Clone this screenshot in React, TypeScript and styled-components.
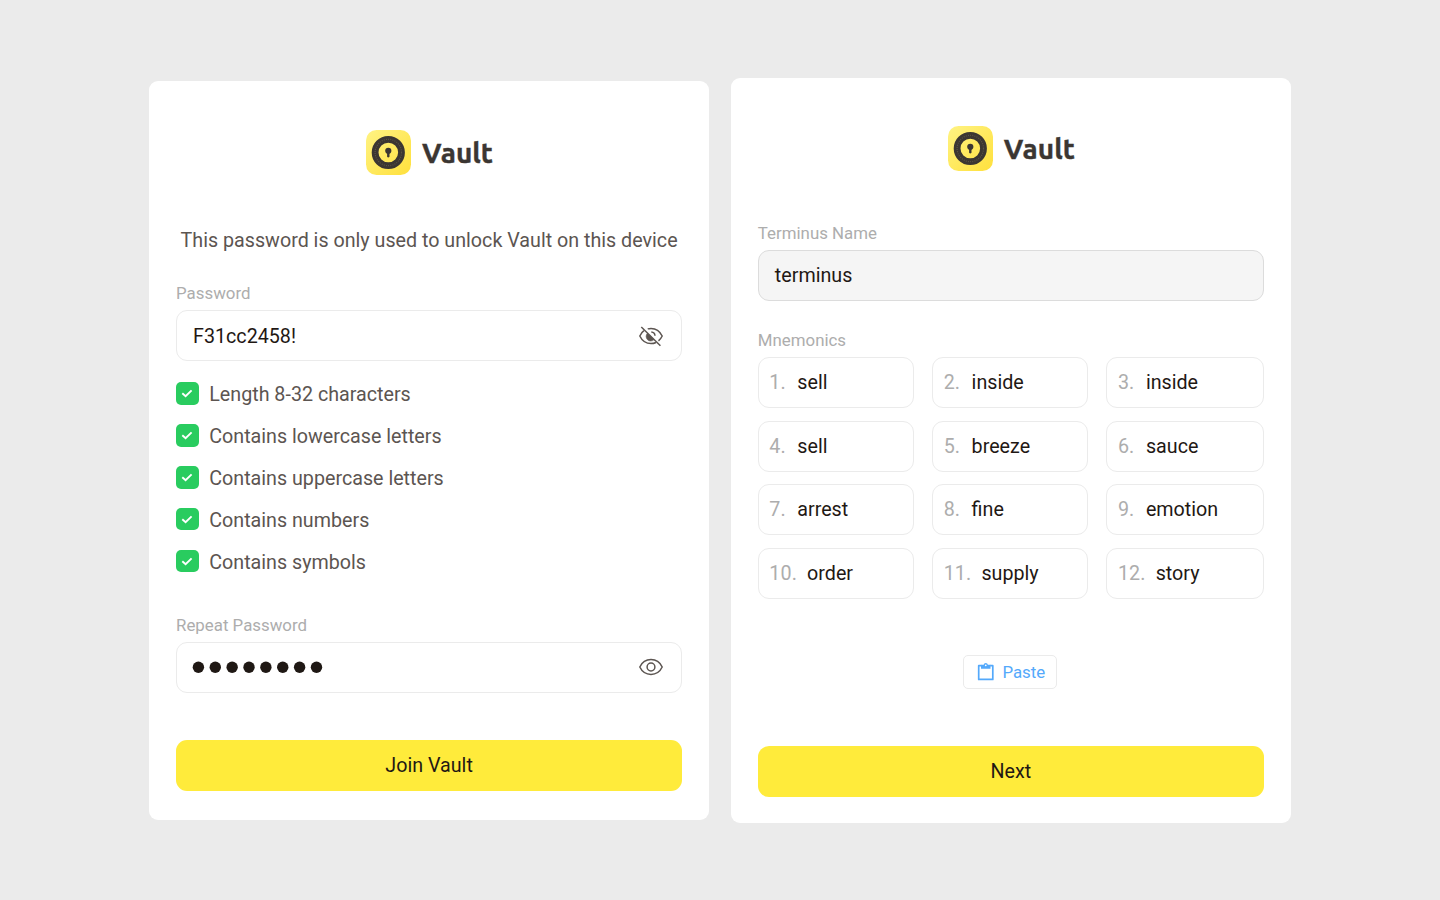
import React from "react";
import styled, { createGlobalStyle } from "styled-components";

const GlobalStyle = createGlobalStyle`
  *, *::before, *::after { box-sizing: border-box; }
  body { margin: 0; background: #ebebeb; font-family: Roboto, "Liberation Sans", sans-serif; }
`;

const Page = styled.main`
  display: flex;
  align-items: center;
  justify-content: center;
  gap: 22.5px;
  width: 1440px;
  height: 900px;
  overflow: hidden;
`;

const Card = styled.section<{ $height: number; $top: number }>`
  display: flex;
  flex-direction: column;
  width: 559.3px;
  height: ${(p) => p.$height}px;
  padding: ${(p) => p.$top}px 26.6px 0;
  border-radius: 9px;
  background: #fff;
`;

const Brand = styled.header`
  display: flex;
  align-items: center;
  justify-content: center;
  gap: 11px;
  height: 45px;
  padding-left: 0.8px;
`;

const BrandName = styled.h1`
  margin: 0;
  padding-top: 1px;
  font: 700 28px/40px Ubuntu, "Noto Sans", sans-serif;
  letter-spacing: 0.05px;
  -webkit-text-stroke: 0.4px #3b3632;
  color: #3b3632;
`;

const Intro = styled.p`
  margin: 51px 0 0;
  font-size: 19.7px;
  line-height: 30px;
  text-align: center;
  white-space: nowrap;
  color: #5c5551;
`;

const Label = styled.label<{ $gap: number }>`
  margin-top: ${(p) => p.$gap}px;
  font-size: 16.85px;
  line-height: 22px;
  color: #adadad;
`;

const Field = styled.div<{ $filled?: boolean }>`
  display: flex;
  align-items: center;
  justify-content: space-between;
  flex: none;
  height: 51px;
  margin-top: 6px;
  padding: 0 18px 0 16px;
  border: 1.3px solid ${(p) => (p.$filled ? "#dcdcdc" : "#ebebeb")};
  border-radius: 11px;
  background: ${(p) => (p.$filled ? "#f5f5f5" : "#fff")};
  font-size: 19.7px;
  color: #1f1814;
`;

const FieldText = styled.span<{ $drop?: number; $lift?: number }>`
  padding-top: ${(p) => p.$drop ?? 0}px;
  padding-bottom: ${(p) => p.$lift ?? 0}px;
`;

const Rules = styled.ul`
  display: flex;
  flex-direction: column;
  gap: 18.9px;
  margin: 21px 0 0;
  padding: 0;
  list-style: none;
`;

const Rule = styled.li`
  display: flex;
  align-items: center;
  gap: 10.6px;
  height: 23px;
  font-size: 19.7px;
  line-height: 23px;
  color: #5c5551;
`;

const RuleText = styled.span`
  padding-top: 2px;
`;

const Tick = styled.span`
  display: grid;
  place-items: center;
  width: 22.6px;
  height: 22.6px;
  border-radius: 5px;
  background: #29cc5f;
`;

const Submit = styled.button<{ $gap: number; $lift?: number }>`
  flex: none;
  height: 51px;
  margin-top: ${(p) => p.$gap}px;
  padding: 0 0 ${(p) => p.$lift ?? 0}px;
  border: 0;
  border-radius: 11px;
  background: #ffeb3b;
  font-family: inherit;
  font-size: 19.7px;
  color: #1f1814;
`;

const Words = styled.ol`
  display: grid;
  grid-template-columns: 156px 156px 157.5px;
  justify-content: space-between;
  row-gap: 12.5px;
  margin: 6px 0 0;
  padding: 0;
  list-style: none;
`;

const Word = styled.li`
  display: flex;
  align-items: center;
  gap: 11.5px;
  height: 51px;
  padding: 0.6px 0 0 10.5px;
  border: 1.3px solid #ebebeb;
  border-radius: 11px;
  font-size: 19.7px;
  color: #1f1814;
`;

const Index = styled.span<{ $wide: boolean }>`
  margin-right: ${(p) => (p.$wide ? -1.4 : 0)}px;
  letter-spacing: 0.1px;
  color: #adadad;
`;

const Paste = styled.button`
  display: flex;
  align-items: center;
  align-self: center;
  flex: none;
  gap: 7.5px;
  width: 94px;
  height: 34px;
  margin: 56.5px 2px 0 0;
  padding: 0 0 1px 13px;
  border: 1.3px solid #ebebeb;
  border-radius: 5px;
  background: #fff;
  font-family: inherit;
  font-size: 16.85px;
  color: #54a9fb;
`;

const Logo = ({ id }: { id: string }) => (
  <svg width="45" height="45" viewBox="0 0 45 45">
    <defs>
      <linearGradient id={id} x1="0" y1="0" x2="1" y2="1">
        <stop offset="0" stopColor="#fff383" />
        <stop offset="1" stopColor="#ffe03c" />
      </linearGradient>
    </defs>
    <rect width="45" height="45" rx="10.5" fill={`url(#${id})`} />
    <circle cx="22.3" cy="22.5" r="13.2" fill="none" stroke="#3b3632" strokeWidth="6.8" />
    <circle cx="22.3" cy="22.5" r="13.2" fill="none" stroke="#5c5444" strokeWidth="1.2" strokeDasharray="1 1.2" />
    <circle cx="22.3" cy="20.8" r="3.1" fill="#3b3632" />
    <path d="M21.1 22h2.4v4.8q-1.2 1.2-2.4 0z" fill="#3b3632" />
  </svg>
);

const Check = () => (
  <svg width="12" height="9" viewBox="0 0 12 9" fill="none">
    <path d="M1.3 4.2 4.6 7.3 10.6 1.4" stroke="#fff" strokeWidth="1.9" />
  </svg>
);

const Dots = () => (
  <svg width="132" height="12" viewBox="0 0 132 12" fill="#1f1814" overflow="visible">
    {Array.from({ length: 8 }, (_, i) => (
      <circle key={i} cx={5.4 + i * 16.87} cy="6.2" r="5.7" />
    ))}
  </svg>
);

const Eye = () => (
  <svg width="24" height="24" viewBox="0 0 24 24" fill="none" stroke="#5c5551" strokeWidth="1.5">
    <path d="M.8 12C3.2 7 7.2 4.6 12 4.6S20.8 7 23.2 12C20.8 17 16.8 19.4 12 19.4S3.2 17 .8 12Z" />
    <circle cx="12" cy="12" r="3.9" />
  </svg>
);

const EyeOff = () => (
  <svg width="24" height="24" viewBox="0 0 24 24" fill="none" stroke="#5c5551" strokeWidth="1.5">
    <path d="M4.9 6.7C3.2 8 1.8 9.8.8 12c2.4 5 6.4 7.6 11.2 7.6 1.8 0 3.5-.4 5-1.1M8.7 4.9A13 13 0 0 1 12 4.4c4.8 0 8.8 2.6 11.2 7.6a14 14 0 0 1-3.7 4.8" />
    <path d="M8.4 9.3a4.5 4.5 0 0 0 6.6 6.3z" fill="#5c5551" strokeWidth=".6" />
    <path d="M12.3 8.1a4 4 0 0 1 3.7 3.7" />
    <path d="M2.3 3 21.4 21.7" strokeWidth="1.5" />
  </svg>
);

const Clipboard = () => (
  <svg width="18" height="18" viewBox="0 0 18 18" fill="none">
    <path d="M4.4 2.7H1.7v13.7h14.1V2.7h-2.7" stroke="#54a9fb" strokeWidth="1.7" strokeLinejoin="round" />
    <path d="M4 1.8h2.6a2.2 2.2 0 0 1 4.3 0h2.6v4H4z" fill="#54a9fb" />
    <circle cx="8.75" cy="2.3" r=".9" fill="#fff" />
  </svg>
);

const rules = [
  "Length 8-32 characters",
  "Contains lowercase letters",
  "Contains uppercase letters",
  "Contains numbers",
  "Contains symbols",
];

const words = [
  "sell", "inside", "inside", "sell", "breeze", "sauce",
  "arrest", "fine", "emotion", "order", "supply", "story",
];

export default function App() {
  return (
    <>
      <GlobalStyle />
      <Page>
        <Card $height={739} $top={49.5}>
          <Brand>
            <Logo id="logo-password" />
            <BrandName>Vault</BrandName>
          </Brand>
          <Intro>This password is only used to unlock Vault on this device</Intro>
          <Label $gap={26}>Password</Label>
          <Field>
            <FieldText $drop={1}>F31cc2458!</FieldText>
            <EyeOff />
          </Field>
          <Rules>
            {rules.map((rule) => (
              <Rule key={rule}>
                <Tick>
                  <Check />
                </Tick>
                <RuleText>{rule}</RuleText>
              </Rule>
            ))}
          </Rules>
          <Label $gap={41}>Repeat Password</Label>
          <Field>
            <Dots />
            <Eye />
          </Field>
          <Submit $gap={47}>Join Vault</Submit>
        </Card>
        <Card $height={745} $top={48.5}>
          <Brand>
            <Logo id="logo-mnemonics" />
            <BrandName>Vault</BrandName>
          </Brand>
          <Label $gap={51}>Terminus Name</Label>
          <Field $filled>
            <FieldText $lift={1}>terminus</FieldText>
          </Field>
          <Label $gap={28}>Mnemonics</Label>
          <Words>
            {words.map((word, i) => (
              <Word key={i}>
                <Index $wide={i > 8}>{i + 1}.</Index>
                <span>{word}</span>
              </Word>
            ))}
          </Words>
          <Paste>
            <Clipboard />
            Paste
          </Paste>
          <Submit $gap={57} $lift={1}>Next</Submit>
        </Card>
      </Page>
    </>
  );
}
